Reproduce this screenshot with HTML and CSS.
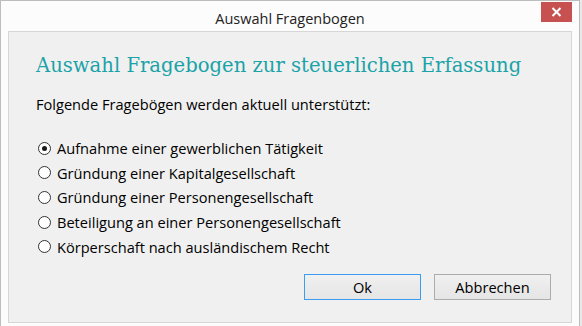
FILE: index.html
```html
<!DOCTYPE html>
<html lang="de">
<head>
<meta charset="utf-8">
<title>Auswahl Fragenbogen</title>
<link rel="stylesheet" href="styles.css">
</head>
<body>
<div class="window">
  <div class="titlebar">
    <span class="title">Auswahl Fragenbogen</span>
    <button class="close" aria-label="Schließen">
      <svg width="11" height="10" viewBox="0 0 11 10"><path d="M1.5 1 L9.5 9 M9.5 1 L1.5 9" stroke="#fff" stroke-width="2"/></svg>
    </button>
  </div>
  <div class="panel">
    <h1 class="heading">Auswahl Fragebogen zur steuerlichen Erfassung</h1>
    <p class="intro">Folgende Fragebögen werden aktuell unterstützt:</p>
    <ul class="options">
      <li class="option"><span class="radio checked"></span><span class="label">Aufnahme einer gewerblichen Tätigkeit</span></li>
      <li class="option"><span class="radio"></span><span class="label">Gründung einer Kapitalgesellschaft</span></li>
      <li class="option"><span class="radio"></span><span class="label">Gründung einer Personengesellschaft</span></li>
      <li class="option"><span class="radio"></span><span class="label">Beteiligung an einer Personengesellschaft</span></li>
      <li class="option"><span class="radio"></span><span class="label">Körperschaft nach ausländischem Recht</span></li>
    </ul>
    <div class="buttons">
      <button class="btn btn-default">Ok</button>
      <button class="btn">Abbrechen</button>
    </div>
  </div>
</div>
</body>
</html>
```
FILE: styles.css
```css
html, body {
  margin: 0;
  padding: 0;
  background: #e8e8e8;
}
body {
  font-family: "Open Sans", "Noto Sans", sans-serif;
  font-size: 14.6px;
  color: #000;
  overflow: hidden;
}
.window {
  width: 578px;
  height: 329px;
  border: 1px solid #bdbdbd;
  background: #fcfcfc;
  display: flex;
  flex-direction: column;
  position: relative;
}
.titlebar {
  height: 30px;
  flex: none;
  display: flex;
  align-items: center;
  justify-content: center;
}
.title {
  font-size: 14.5px;
  color: #222;
  margin-top: 4px;
}
.close {
  position: absolute;
  top: 1px;
  right: 7px;
  width: 31px;
  height: 20px;
  border: 0;
  padding: 0;
  background: #c75050;
  display: flex;
  align-items: center;
  justify-content: center;
}
.panel {
  margin: 0 7px 7px 7px;
  flex: 1;
  border: 1px solid #d6d6d6;
  background: #f0f0f0;
  padding: 0 20px 0 27px;
  display: flex;
  flex-direction: column;
}
.heading {
  margin: 19px 0 0 0;
  font-family: "DejaVu Serif", serif;
  font-weight: normal;
  font-size: 19.6px;
  line-height: 30px;
  color: #1ba3a8;
}
.intro {
  margin: 13px 0 0 0;
  line-height: 20px;
}
.options {
  list-style: none;
  margin: 22px 0 0 0;
  padding: 0;
}
.option {
  height: 24.6px;
  display: flex;
  align-items: center;
}
.radio {
  width: 11px;
  height: 11px;
  border: 1px solid #333;
  border-radius: 50%;
  background: #fff;
  margin: 0 6px 0 2px;
  display: flex;
  align-items: center;
  justify-content: center;
}
.radio.checked::after {
  content: "";
  width: 5px;
  height: 5px;
  border-radius: 50%;
  background: #1a1a1a;
}
.buttons {
  display: flex;
  justify-content: flex-end;
  gap: 13px;
  margin-top: 15px;
}
.btn {
  width: 117px;
  height: 26px;
  border: 1px solid #acacac;
  background: linear-gradient(#f0f0f0, #e5e5e5);
  font-family: "Open Sans", "Noto Sans", sans-serif;
  font-size: 14.6px;
  color: #000;
  padding: 0;
}
.btn-default {
  border-color: #3c9cf2;
}
```
